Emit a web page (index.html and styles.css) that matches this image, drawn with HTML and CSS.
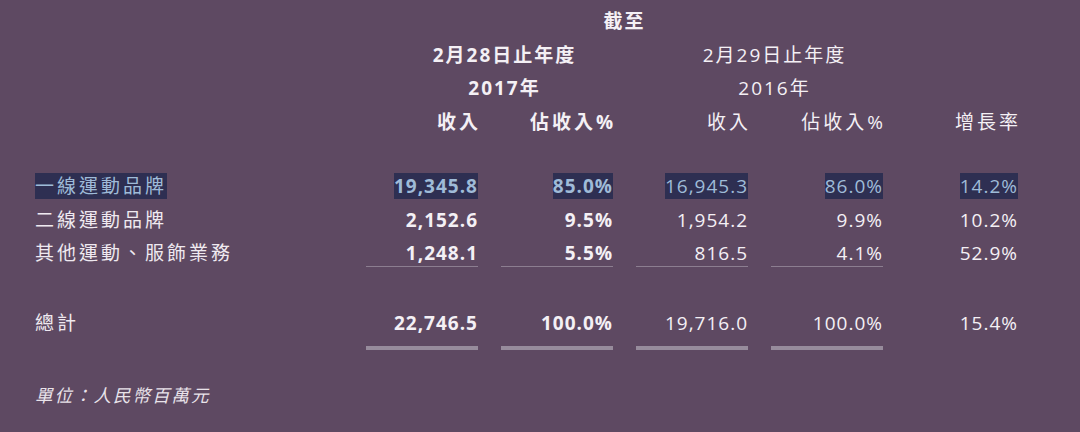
FILE: index.html
```html
<!DOCTYPE html>
<html lang="zh-Hant">
<head>
<meta charset="utf-8">
<title>收入</title>
<link rel="stylesheet" href="styles.css">
</head>
<body>
<div class="page">
  <div class="grid head">
    <div class="asof b">截至</div>
    <div class="period p17 b">2月28日止年度</div>
    <div class="period p16">2月29日止年度</div>
    <div class="period p17 b">2017年</div>
    <div class="period p16">2016年</div>
    <div class="colh c2 b">收入</div>
    <div class="colh c3 b">佔收入%</div>
    <div class="colh c4">收入</div>
    <div class="colh c5">佔收入%</div>
    <div class="colh c6">增長率</div>
  </div>

  <div class="grid body">
    <div class="lab"><span class="sel">一線運動品牌</span></div>
    <div class="num b"><span class="sel">19,345.8</span></div>
    <div class="num b"><span class="sel">85.0%</span></div>
    <div class="num"><span class="sel">16,945.3</span></div>
    <div class="num"><span class="sel">86.0%</span></div>
    <div class="num"><span class="sel">14.2%</span></div>

    <div class="lab">二線運動品牌</div>
    <div class="num b">2,152.6</div>
    <div class="num b">9.5%</div>
    <div class="num">1,954.2</div>
    <div class="num">9.9%</div>
    <div class="num">10.2%</div>

    <div class="lab">其他運動、服飾業務</div>
    <div class="num b ul">1,248.1</div>
    <div class="num b ul">5.5%</div>
    <div class="num ul">816.5</div>
    <div class="num ul">4.1%</div>
    <div class="num">52.9%</div>
  </div>

  <div class="grid total">
    <div class="lab">總計</div>
    <div class="num b dl">22,746.5</div>
    <div class="num b dl">100.0%</div>
    <div class="num dl">19,716.0</div>
    <div class="num dl">100.0%</div>
    <div class="num">15.4%</div>
  </div>

  <div class="foot">單位：人民幣百萬元</div>
</div>
</body>
</html>
```
FILE: styles.css
```css
html, body {
  margin: 0;
  padding: 0;
  background: #5e4962;
}
body {
  width: 1080px;
  height: 432px;
  overflow: hidden;
  color: #f4f0f5;
  font-family: "Open Sans", "Noto Sans CJK TC", sans-serif;
  font-size: 19px;
}
.page {
  padding: 5px 0 0 35px;
}
.grid {
  display: grid;
  grid-template-columns: 308px repeat(5, 112px);
  column-gap: 23px;
}
.b { font-weight: 700; }

.head {
  line-height: 33.5px;
  letter-spacing: 2px;
}
.asof {
  grid-column: 2 / 6;
  grid-row: 1;
  text-align: center;
}
.period {
  text-align: center;
  padding-left: 30px;
}
.p17 { grid-column: 2 / 4; }
.p16 { grid-column: 4 / 6; }
.colh {
  grid-row: 4;
  text-align: right;
  letter-spacing: 3px;
  margin-right: -3px;
}
.c2 { grid-column: 2; }
.c3 { grid-column: 3; }
.c4 { grid-column: 4; }
.c5 { grid-column: 5; }
.c6 { grid-column: 6; }

.body {
  margin-top: 34px;
  row-gap: 7.5px;
  line-height: 26px;
}
.total {
  margin-top: 43px;
  line-height: 26px;
}
.lab {
  letter-spacing: 3px;
  color: #efe9f0;
}
.num {
  text-align: right;
  letter-spacing: 1px;
}
.ul {
  border-bottom: 1px solid #8c7e90;
}
.dl {
  padding-bottom: 10px;
  border-bottom: 4px solid #978c9c;
}
.sel {
  background: #2e2f52;
  color: #9fbbd8;
}
.foot {
  margin-top: 32px;
  line-height: 26px;
  font-size: 17.5px;
  font-style: italic;
  letter-spacing: 2px;
  color: #e9e3ea;
}
```
